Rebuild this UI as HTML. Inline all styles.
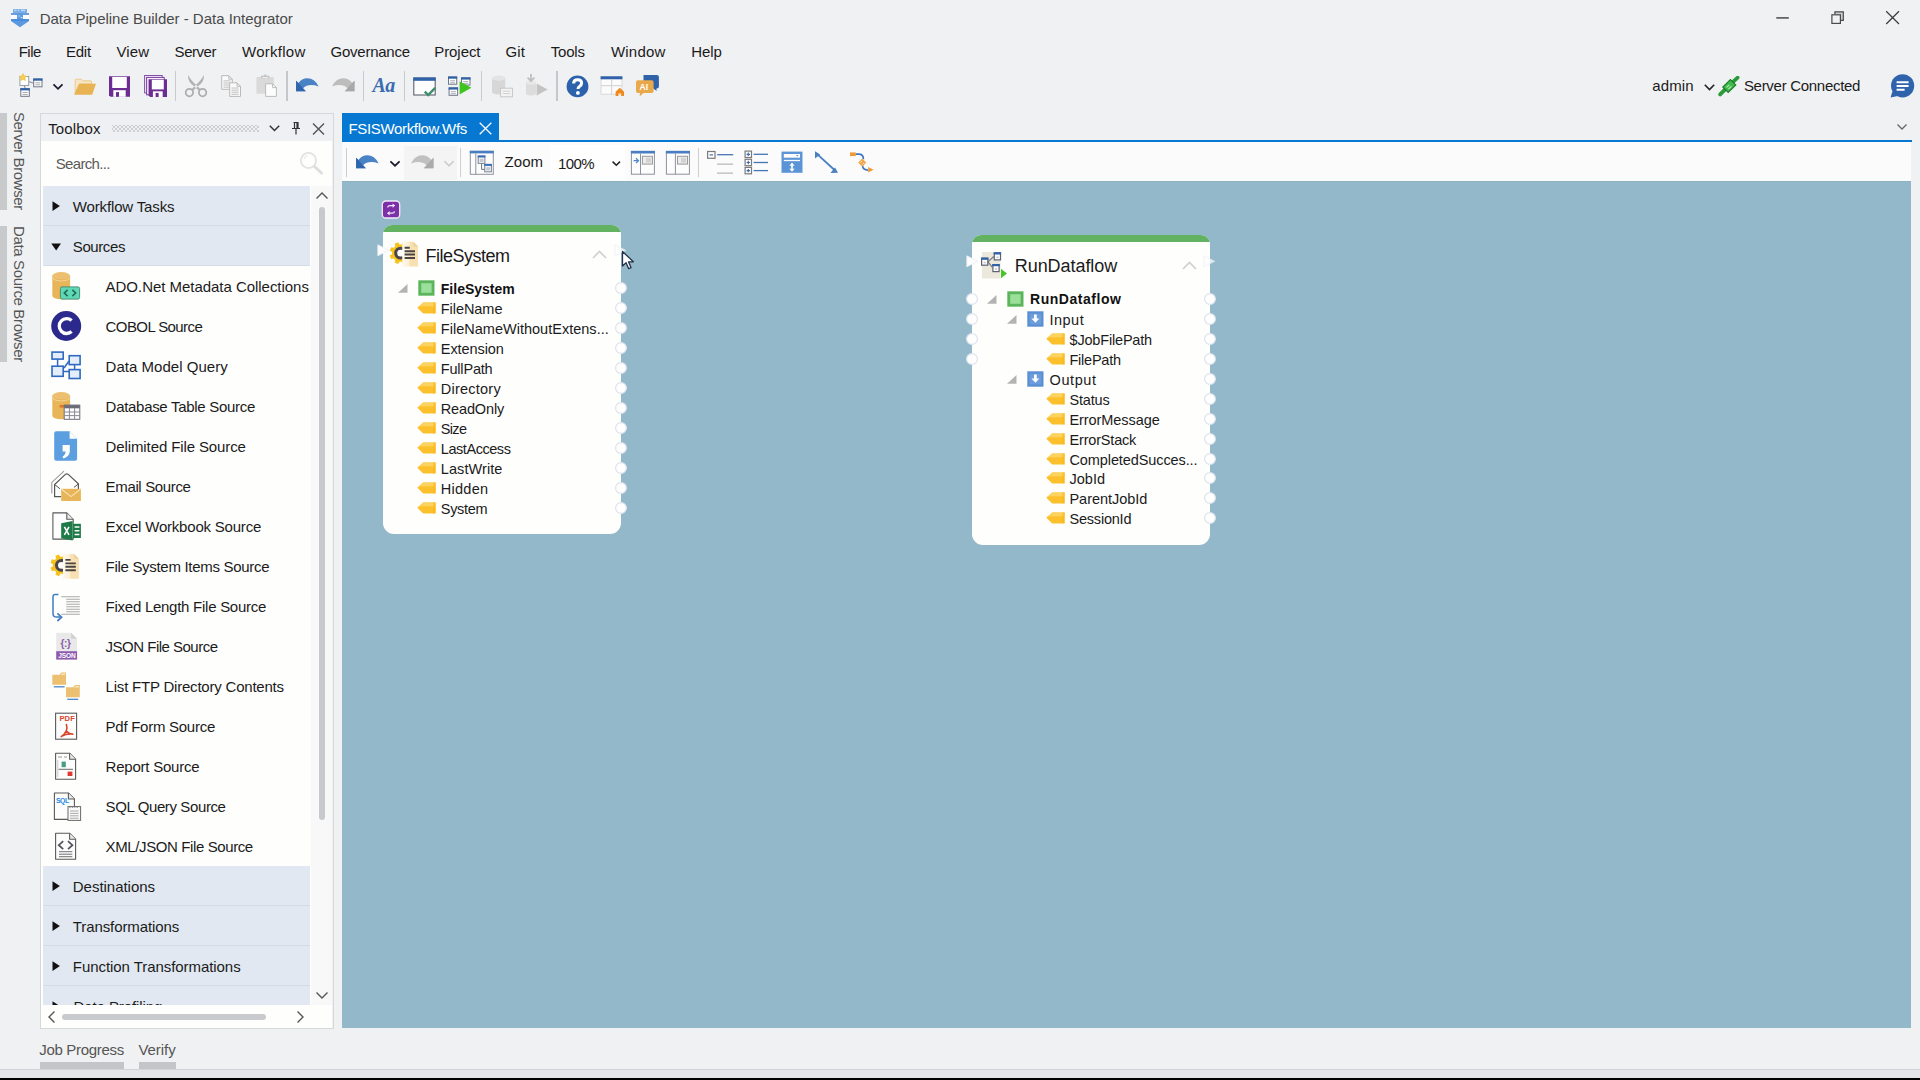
<!DOCTYPE html>
<html><head><meta charset="utf-8"><title>Data Pipeline Builder - Data Integrator</title>
<style>
html,body{margin:0;padding:0;}
body{width:1920px;height:1080px;overflow:hidden;position:relative;background:#f0f1f3;font-family:"Liberation Sans",sans-serif;color:#1b1b1b;}
.t{position:absolute;white-space:nowrap;line-height:1;}
.b{position:absolute;display:block;}
</style></head><body>
<span class="t" style="left:39.7px;top:11.1px;font-size:15px;letter-spacing:-0.011px;color:#4a4a4a;">Data Pipeline Builder - Data Integrator</span>
<svg class="b" style="left:1770px;top:5px;" width="140" height="26" viewBox="0 0 140 26"><path d="M6.3 12.9h12.5" stroke="#5c5c5c" stroke-width="1.7" fill="none"/><path d="M64.9 9.3V6.9h8.4v8.4h-2.6" stroke="#4a4a4a" stroke-width="1.2" fill="#cfcfcf"/><rect x="61.9" y="9.8" width="8.5" height="8.6" stroke="#4a4a4a" stroke-width="1.2" fill="#f0f1f3"/><path d="M116.2 6.2l12.8 12.8M129 6.2l-12.8 12.8" stroke="#3c3c3c" stroke-width="1.25" fill="none"/></svg>
<span class="t" style="left:18.7px;top:44.3px;font-size:15px;letter-spacing:-0.514px;color:#1b1b1b;">File</span>
<span class="t" style="left:65.9px;top:44.3px;font-size:15px;letter-spacing:-0.186px;color:#1b1b1b;">Edit</span>
<span class="t" style="left:116.6px;top:44.3px;font-size:15px;letter-spacing:0.041px;color:#1b1b1b;">View</span>
<span class="t" style="left:174.6px;top:44.3px;font-size:15px;letter-spacing:-0.465px;color:#1b1b1b;">Server</span>
<span class="t" style="left:242.0px;top:44.3px;font-size:15px;letter-spacing:0.262px;color:#1b1b1b;">Workflow</span>
<span class="t" style="left:330.6px;top:44.3px;font-size:15px;letter-spacing:-0.253px;color:#1b1b1b;">Governance</span>
<span class="t" style="left:434.2px;top:44.3px;font-size:15px;letter-spacing:-0.055px;color:#1b1b1b;">Project</span>
<span class="t" style="left:505.6px;top:44.3px;font-size:15px;letter-spacing:0.076px;color:#1b1b1b;">Git</span>
<span class="t" style="left:550.8px;top:44.3px;font-size:15px;letter-spacing:-0.203px;color:#1b1b1b;">Tools</span>
<span class="t" style="left:610.9px;top:44.3px;font-size:15px;letter-spacing:0.243px;color:#1b1b1b;">Window</span>
<span class="t" style="left:691.2px;top:44.3px;font-size:15px;letter-spacing:-0.086px;color:#1b1b1b;">Help</span>
<span class="t" style="left:1652.3px;top:77.8px;font-size:15px;letter-spacing:0.108px;color:#1b1b1b;">admin</span>
<svg class="b" style="left:1703px;top:83px;" width="13" height="9" viewBox="0 0 13 9"><path d="M1.8 1.8l4.7 4.7l4.7-4.7" stroke="#222" stroke-width="1.6" fill="none"/></svg>
<span class="t" style="left:1743.9px;top:77.7px;font-size:15px;letter-spacing:-0.289px;color:#1b1b1b;">Server Connected</span>
<svg class="b" style="left:1896px;top:123px;" width="12" height="8" viewBox="0 0 12 8"><path d="M1.5 1.5l4.5 4.5l4.5-4.5" stroke="#666" stroke-width="1.3" fill="none"/></svg>
<div class="b" style="left:0px;top:113px;width:7px;height:97px;background:#c8c9cb;"></div>
<div class="b" style="left:0px;top:226px;width:7px;height:136px;background:#c8c9cb;"></div>
<span class="t" style="left:19px;top:112.4px;font-size:15px;letter-spacing:-0.391px;color:#555;transform-origin:0 0;transform:rotate(90deg) translateY(-50%);line-height:1">Server Browser</span>
<span class="t" style="left:19px;top:226.3px;font-size:15px;letter-spacing:-0.351px;color:#555;transform-origin:0 0;transform:rotate(90deg) translateY(-50%);line-height:1">Data Source Browser</span>
<div class="b" style="left:40px;top:113px;width:294px;height:916px;background:#f0f1f3;border:1px solid #d5d7db;box-sizing:border-box"></div>
<div class="b" style="left:41px;top:114px;width:291px;height:27px;background:#eef0f3;"></div>
<div class="b" style="left:41px;top:141px;width:291px;height:887px;background:#fefefd;"></div>
<div class="b" style="left:311px;top:186px;width:21px;height:819px;background:#f8f8f8;"></div>
<span class="t" style="left:48.2px;top:121.3px;font-size:15px;letter-spacing:0.114px;color:#1b1b1b;">Toolbox</span>
<div class="b" style="left:112px;top:125px;width:147px;height:7px;background-image:radial-gradient(circle,#ccced4 0.75px,transparent 1.05px),radial-gradient(circle,#ccced4 0.75px,transparent 1.05px);background-size:4px 4px;background-position:0 0,2px 2px"></div>
<svg class="b" style="left:268px;top:124px;" width="13" height="9" viewBox="0 0 13 9"><path d="M1.8 1.8l4.7 4.7l4.7-4.7" stroke="#333" stroke-width="1.5" fill="none"/></svg>
<svg class="b" style="left:290px;top:121px;" width="12" height="14" viewBox="0 0 12 14"><path d="M3.5 1.5h5M4.5 1.5v6M8 1.5v6M7 1.5v6M2 7.5h8M6 7.5v6" stroke="#333" stroke-width="1.2" fill="none"/></svg>
<svg class="b" style="left:311px;top:122px;" width="15" height="14" viewBox="0 0 15 14"><path d="M2 1.5l11 11M13 1.5l-11 11" stroke="#505050" stroke-width="1.25" fill="none"/></svg>
<span class="t" style="left:55.8px;top:156.0px;font-size:15px;letter-spacing:-0.683px;color:#5a5a5a;">Search...</span>
<svg class="b" style="left:299px;top:151px;" width="26" height="24" viewBox="0 0 26 24"><circle cx="9.5" cy="9.5" r="7.6" stroke="#e2e2e2" stroke-width="1.8" fill="none"/><path d="M15.5 15.5l7 6.5" stroke="#dedede" stroke-width="3" stroke-linecap="round"/><path d="M5 8a5 5 0 0 1 3.5-3.5" stroke="#e6e6e6" stroke-width="1.2" fill="none"/></svg>
<div class="b" style="left:43px;top:186px;width:267px;height:39px;background:#e1e8f1;"></div>
<div class="b" style="left:43px;top:225px;width:267px;height:1px;background:#d5dce6;"></div>
<svg class="b" style="left:52px;top:201px;" width="9" height="11" viewBox="0 0 9 11"><path d="M0.5 0.2l7.4 4.9l-7.4 4.9z" fill="#111"/></svg>
<span class="t" style="left:72.8px;top:198.8px;font-size:15px;letter-spacing:-0.147px;color:#1b1b1b;">Workflow Tasks</span>
<div class="b" style="left:43px;top:226px;width:267px;height:39px;background:#e1e8f1;"></div>
<div class="b" style="left:43px;top:265px;width:267px;height:1px;background:#d5dce6;"></div>
<svg class="b" style="left:51px;top:242.5px;" width="11" height="8" viewBox="0 0 11 8"><path d="M0.3 0.5h9.7l-4.85 7z" fill="#111"/></svg>
<span class="t" style="left:72.8px;top:238.8px;font-size:15px;letter-spacing:-0.404px;color:#1b1b1b;">Sources</span>
<span class="t" style="left:105.6px;top:278.8px;font-size:15px;letter-spacing:-0.035px;color:#1b1b1b;">ADO.Net Metadata Collections</span>
<span class="t" style="left:105.6px;top:318.8px;font-size:15px;letter-spacing:-0.588px;color:#1b1b1b;">COBOL Source</span>
<span class="t" style="left:105.6px;top:358.8px;font-size:15px;letter-spacing:0.028px;color:#1b1b1b;">Data Model Query</span>
<span class="t" style="left:105.6px;top:398.8px;font-size:15px;letter-spacing:-0.299px;color:#1b1b1b;">Database Table Source</span>
<span class="t" style="left:105.6px;top:438.8px;font-size:15px;letter-spacing:-0.112px;color:#1b1b1b;">Delimited File Source</span>
<span class="t" style="left:105.6px;top:478.8px;font-size:15px;letter-spacing:-0.350px;color:#1b1b1b;">Email Source</span>
<span class="t" style="left:105.6px;top:518.8px;font-size:15px;letter-spacing:-0.205px;color:#1b1b1b;">Excel Workbook Source</span>
<span class="t" style="left:105.6px;top:558.8px;font-size:15px;letter-spacing:-0.304px;color:#1b1b1b;">File System Items Source</span>
<span class="t" style="left:105.6px;top:598.8px;font-size:15px;letter-spacing:-0.261px;color:#1b1b1b;">Fixed Length File Source</span>
<span class="t" style="left:105.6px;top:638.8px;font-size:15px;letter-spacing:-0.508px;color:#1b1b1b;">JSON File Source</span>
<span class="t" style="left:105.6px;top:678.8px;font-size:15px;letter-spacing:-0.210px;color:#1b1b1b;">List FTP Directory Contents</span>
<span class="t" style="left:105.6px;top:718.8px;font-size:15px;letter-spacing:-0.266px;color:#1b1b1b;">Pdf Form Source</span>
<span class="t" style="left:105.6px;top:758.8px;font-size:15px;letter-spacing:-0.226px;color:#1b1b1b;">Report Source</span>
<span class="t" style="left:105.6px;top:798.8px;font-size:15px;letter-spacing:-0.387px;color:#1b1b1b;">SQL Query Source</span>
<span class="t" style="left:105.6px;top:838.8px;font-size:15px;letter-spacing:-0.392px;color:#1b1b1b;">XML/JSON File Source</span>
<div class="b" style="left:43px;top:866px;width:267px;height:39px;background:#e1e8f1;"></div>
<div class="b" style="left:43px;top:905px;width:267px;height:1px;background:#d5dce6;"></div>
<svg class="b" style="left:52px;top:881px;" width="9" height="11" viewBox="0 0 9 11"><path d="M0.5 0.2l7.4 4.9l-7.4 4.9z" fill="#111"/></svg>
<span class="t" style="left:72.8px;top:878.8px;font-size:15px;letter-spacing:-0.029px;color:#1b1b1b;">Destinations</span>
<div class="b" style="left:43px;top:906px;width:267px;height:39px;background:#e1e8f1;"></div>
<div class="b" style="left:43px;top:945px;width:267px;height:1px;background:#d5dce6;"></div>
<svg class="b" style="left:52px;top:921px;" width="9" height="11" viewBox="0 0 9 11"><path d="M0.5 0.2l7.4 4.9l-7.4 4.9z" fill="#111"/></svg>
<span class="t" style="left:72.8px;top:918.8px;font-size:15px;letter-spacing:-0.095px;color:#1b1b1b;">Transformations</span>
<div class="b" style="left:43px;top:946px;width:267px;height:39px;background:#e1e8f1;"></div>
<div class="b" style="left:43px;top:985px;width:267px;height:1px;background:#d5dce6;"></div>
<svg class="b" style="left:52px;top:961px;" width="9" height="11" viewBox="0 0 9 11"><path d="M0.5 0.2l7.4 4.9l-7.4 4.9z" fill="#111"/></svg>
<span class="t" style="left:72.8px;top:958.8px;font-size:15px;letter-spacing:-0.061px;color:#1b1b1b;">Function Transformations</span>
<div class="b" style="left:43px;top:986px;width:267px;height:19px;overflow:hidden;background:#e1e8f1">
<svg class="b" style="left:9px;top:15px" width="9" height="11"><path d="M0.5 0.2l7.4 4.9l-7.4 4.9z" fill="#111"/></svg>
<span class="t" style="left:30.6px;top:12.8px;font-size:15px;letter-spacing:-0.1px">Data Profiling</span></div>
<svg class="b" style="left:315px;top:191px;" width="14" height="9" viewBox="0 0 14 9"><path d="M1.5 7.5l5.5-5.5l5.5 5.5" stroke="#555" stroke-width="1.4" fill="none"/></svg>
<div class="b" style="left:319.3px;top:207px;width:5.4px;height:613px;background:#c8c9cc;border-radius:3px"></div>
<svg class="b" style="left:315px;top:991px;" width="14" height="9" viewBox="0 0 14 9"><path d="M1.5 1.5l5.5 5.5l5.5-5.5" stroke="#555" stroke-width="1.4" fill="none"/></svg>
<svg class="b" style="left:47px;top:1010px;" width="9" height="14" viewBox="0 0 9 14"><path d="M7.5 1.5l-5.5 5.5l5.5 5.5" stroke="#555" stroke-width="1.4" fill="none"/></svg>
<svg class="b" style="left:296px;top:1010px;" width="9" height="14" viewBox="0 0 9 14"><path d="M1.5 1.5l5.5 5.5l-5.5 5.5" stroke="#555" stroke-width="1.4" fill="none"/></svg>
<div class="b" style="left:62px;top:1014px;width:204px;height:6px;background:#c9cacd;border-radius:3px"></div>
<span class="t" style="left:39.2px;top:1042.1px;font-size:15px;letter-spacing:-0.299px;color:#555;">Job Progress</span>
<span class="t" style="left:138.4px;top:1042.1px;font-size:15px;letter-spacing:-0.053px;color:#555;">Verify</span>
<div class="b" style="left:40px;top:1062px;width:84px;height:7px;background:#c4c5c9;"></div>
<div class="b" style="left:139px;top:1062px;width:37px;height:7px;background:#c4c5c9;"></div>
<div class="b" style="left:0px;top:1069px;width:1920px;height:1px;background:#d2d3d6;"></div>
<div class="b" style="left:0px;top:1070px;width:1920px;height:8px;background:#e4e5e8;"></div>
<div class="b" style="left:0px;top:1078px;width:1920px;height:2px;background:#000;"></div>
<div class="b" style="left:342px;top:113px;width:157px;height:28px;background:#0678d2;"></div>
<div class="b" style="left:342px;top:140px;width:1570px;height:2px;background:#0678d2;"></div>
<span class="t" style="left:348.5px;top:121.3px;font-size:15px;letter-spacing:-0.344px;color:#fff;">FSISWorkflow.Wfs</span>
<svg class="b" style="left:478px;top:121px;" width="15" height="15" viewBox="0 0 15 15"><path d="M1.7 1.7l11.6 11.6M13.3 1.7l-11.6 11.6" stroke="#fff" stroke-width="1.3" fill="none"/></svg>
<div class="b" style="left:342px;top:181px;width:1569px;height:847px;background:#93b8c9;"></div>
<div class="b" style="left:342px;top:181px;width:1569px;height:1px;background:#8eb0c1;"></div>
<div class="b" style="left:383px;top:224.5px;width:238px;height:309.5px;background:#fefefd;border-radius:9px 9px 11px 11px;overflow:hidden"><div style="height:7px;background:#62b262"></div></div>
<span class="t" style="left:425.6px;top:246.9px;font-size:18px;letter-spacing:-0.507px;color:#1b1b1b;">FileSystem</span>
<svg class="b" style="left:377px;top:244px;" width="13" height="13" viewBox="0 0 13 13"><path d="M0.8 0.8L11.8 6.3L0.8 11.8z" fill="#fdfdfd" stroke="#e9eef6" stroke-width="0.8" opacity="1"/></svg>
<svg class="b" style="left:614.2px;top:244.2px;" width="13" height="13" viewBox="0 0 13 13"><path d="M0.8 0.8L11.8 6.3L0.8 11.8z" fill="#fdfdfd" stroke="#e9eef6" stroke-width="0.8" opacity="0.8"/></svg>
<svg class="b" style="left:592px;top:250px;" width="15" height="9" viewBox="0 0 15 9"><path d="M1 8l6.5-6.5L14 8" stroke="#d0d0d0" stroke-width="1.7" fill="none"/></svg>
<svg class="b" style="left:397.7px;top:284.3px;" width="10" height="9" viewBox="0 0 10 9"><path d="M9.5 0v8.7H0z" fill="#b3b3b3"/></svg>
<svg class="b" style="left:418px;top:280px;" width="17" height="16" viewBox="0 0 17 16"><rect x="0.3" y="0.3" width="16.2" height="15.4" fill="#5cb55c"/><rect x="3.2" y="3.2" width="10.4" height="9.6" fill="#9adf9a"/></svg>
<span class="t" style="left:440.8px;top:281.5px;font-size:14px;letter-spacing:0.004px;color:#111;font-weight:bold;">FileSystem</span>
<svg class="b" style="left:417.2px;top:302.2px;" width="19" height="12" viewBox="0 0 19 12"><path d="M0.3 5.8L6.2 0.4H18.6V11.4H6.2z" fill="#fcc02c"/><path d="M0.3 5.8L6.2 0.4H18.6V4.2H3.5z" fill="#fdd35f"/><path d="M16.2 0.4h2.4v11h-2.4z" fill="#f9b514" opacity=".55"/></svg>
<span class="t" style="left:440.8px;top:302.1px;font-size:14.5px;letter-spacing:-0.057px;color:#1b1b1b;">FileName</span>
<svg class="b" style="left:417.2px;top:322.2px;" width="19" height="12" viewBox="0 0 19 12"><path d="M0.3 5.8L6.2 0.4H18.6V11.4H6.2z" fill="#fcc02c"/><path d="M0.3 5.8L6.2 0.4H18.6V4.2H3.5z" fill="#fdd35f"/><path d="M16.2 0.4h2.4v11h-2.4z" fill="#f9b514" opacity=".55"/></svg>
<span class="t" style="left:440.8px;top:322.1px;font-size:14.5px;letter-spacing:0.015px;color:#1b1b1b;">FileNameWithoutExtens...</span>
<svg class="b" style="left:417.2px;top:342.2px;" width="19" height="12" viewBox="0 0 19 12"><path d="M0.3 5.8L6.2 0.4H18.6V11.4H6.2z" fill="#fcc02c"/><path d="M0.3 5.8L6.2 0.4H18.6V4.2H3.5z" fill="#fdd35f"/><path d="M16.2 0.4h2.4v11h-2.4z" fill="#f9b514" opacity=".55"/></svg>
<span class="t" style="left:440.8px;top:342.1px;font-size:14.5px;letter-spacing:-0.078px;color:#1b1b1b;">Extension</span>
<svg class="b" style="left:417.2px;top:362.2px;" width="19" height="12" viewBox="0 0 19 12"><path d="M0.3 5.8L6.2 0.4H18.6V11.4H6.2z" fill="#fcc02c"/><path d="M0.3 5.8L6.2 0.4H18.6V4.2H3.5z" fill="#fdd35f"/><path d="M16.2 0.4h2.4v11h-2.4z" fill="#f9b514" opacity=".55"/></svg>
<span class="t" style="left:440.8px;top:362.1px;font-size:14.5px;letter-spacing:-0.189px;color:#1b1b1b;">FullPath</span>
<svg class="b" style="left:417.2px;top:382.2px;" width="19" height="12" viewBox="0 0 19 12"><path d="M0.3 5.8L6.2 0.4H18.6V11.4H6.2z" fill="#fcc02c"/><path d="M0.3 5.8L6.2 0.4H18.6V4.2H3.5z" fill="#fdd35f"/><path d="M16.2 0.4h2.4v11h-2.4z" fill="#f9b514" opacity=".55"/></svg>
<span class="t" style="left:440.8px;top:382.1px;font-size:14.5px;letter-spacing:0.230px;color:#1b1b1b;">Directory</span>
<svg class="b" style="left:417.2px;top:402.2px;" width="19" height="12" viewBox="0 0 19 12"><path d="M0.3 5.8L6.2 0.4H18.6V11.4H6.2z" fill="#fcc02c"/><path d="M0.3 5.8L6.2 0.4H18.6V4.2H3.5z" fill="#fdd35f"/><path d="M16.2 0.4h2.4v11h-2.4z" fill="#f9b514" opacity=".55"/></svg>
<span class="t" style="left:440.8px;top:402.1px;font-size:14.5px;letter-spacing:-0.149px;color:#1b1b1b;">ReadOnly</span>
<svg class="b" style="left:417.2px;top:422.2px;" width="19" height="12" viewBox="0 0 19 12"><path d="M0.3 5.8L6.2 0.4H18.6V11.4H6.2z" fill="#fcc02c"/><path d="M0.3 5.8L6.2 0.4H18.6V4.2H3.5z" fill="#fdd35f"/><path d="M16.2 0.4h2.4v11h-2.4z" fill="#f9b514" opacity=".55"/></svg>
<span class="t" style="left:440.8px;top:422.1px;font-size:14.5px;letter-spacing:-0.682px;color:#1b1b1b;">Size</span>
<svg class="b" style="left:417.2px;top:442.2px;" width="19" height="12" viewBox="0 0 19 12"><path d="M0.3 5.8L6.2 0.4H18.6V11.4H6.2z" fill="#fcc02c"/><path d="M0.3 5.8L6.2 0.4H18.6V4.2H3.5z" fill="#fdd35f"/><path d="M16.2 0.4h2.4v11h-2.4z" fill="#f9b514" opacity=".55"/></svg>
<span class="t" style="left:440.8px;top:442.1px;font-size:14.5px;letter-spacing:-0.447px;color:#1b1b1b;">LastAccess</span>
<svg class="b" style="left:417.2px;top:462.2px;" width="19" height="12" viewBox="0 0 19 12"><path d="M0.3 5.8L6.2 0.4H18.6V11.4H6.2z" fill="#fcc02c"/><path d="M0.3 5.8L6.2 0.4H18.6V4.2H3.5z" fill="#fdd35f"/><path d="M16.2 0.4h2.4v11h-2.4z" fill="#f9b514" opacity=".55"/></svg>
<span class="t" style="left:440.8px;top:462.1px;font-size:14.5px;letter-spacing:0.078px;color:#1b1b1b;">LastWrite</span>
<svg class="b" style="left:417.2px;top:482.2px;" width="19" height="12" viewBox="0 0 19 12"><path d="M0.3 5.8L6.2 0.4H18.6V11.4H6.2z" fill="#fcc02c"/><path d="M0.3 5.8L6.2 0.4H18.6V4.2H3.5z" fill="#fdd35f"/><path d="M16.2 0.4h2.4v11h-2.4z" fill="#f9b514" opacity=".55"/></svg>
<span class="t" style="left:440.8px;top:482.1px;font-size:14.5px;letter-spacing:0.273px;color:#1b1b1b;">Hidden</span>
<svg class="b" style="left:417.2px;top:502.2px;" width="19" height="12" viewBox="0 0 19 12"><path d="M0.3 5.8L6.2 0.4H18.6V11.4H6.2z" fill="#fcc02c"/><path d="M0.3 5.8L6.2 0.4H18.6V4.2H3.5z" fill="#fdd35f"/><path d="M16.2 0.4h2.4v11h-2.4z" fill="#f9b514" opacity=".55"/></svg>
<span class="t" style="left:440.8px;top:502.1px;font-size:14.5px;letter-spacing:-0.328px;color:#1b1b1b;">System</span>
<svg class="b" style="left:613.9px;top:281px;" width="14" height="14" viewBox="0 0 14 14"><circle cx="7" cy="7" r="5.4" fill="#fefefe" stroke="#dde3ec" stroke-width="1.2"/></svg>
<svg class="b" style="left:613.9px;top:301px;" width="14" height="14" viewBox="0 0 14 14"><circle cx="7" cy="7" r="5.4" fill="#fefefe" stroke="#dde3ec" stroke-width="1.2"/></svg>
<svg class="b" style="left:613.9px;top:321px;" width="14" height="14" viewBox="0 0 14 14"><circle cx="7" cy="7" r="5.4" fill="#fefefe" stroke="#dde3ec" stroke-width="1.2"/></svg>
<svg class="b" style="left:613.9px;top:341px;" width="14" height="14" viewBox="0 0 14 14"><circle cx="7" cy="7" r="5.4" fill="#fefefe" stroke="#dde3ec" stroke-width="1.2"/></svg>
<svg class="b" style="left:613.9px;top:361px;" width="14" height="14" viewBox="0 0 14 14"><circle cx="7" cy="7" r="5.4" fill="#fefefe" stroke="#dde3ec" stroke-width="1.2"/></svg>
<svg class="b" style="left:613.9px;top:381px;" width="14" height="14" viewBox="0 0 14 14"><circle cx="7" cy="7" r="5.4" fill="#fefefe" stroke="#dde3ec" stroke-width="1.2"/></svg>
<svg class="b" style="left:613.9px;top:401px;" width="14" height="14" viewBox="0 0 14 14"><circle cx="7" cy="7" r="5.4" fill="#fefefe" stroke="#dde3ec" stroke-width="1.2"/></svg>
<svg class="b" style="left:613.9px;top:421px;" width="14" height="14" viewBox="0 0 14 14"><circle cx="7" cy="7" r="5.4" fill="#fefefe" stroke="#dde3ec" stroke-width="1.2"/></svg>
<svg class="b" style="left:613.9px;top:441px;" width="14" height="14" viewBox="0 0 14 14"><circle cx="7" cy="7" r="5.4" fill="#fefefe" stroke="#dde3ec" stroke-width="1.2"/></svg>
<svg class="b" style="left:613.9px;top:461px;" width="14" height="14" viewBox="0 0 14 14"><circle cx="7" cy="7" r="5.4" fill="#fefefe" stroke="#dde3ec" stroke-width="1.2"/></svg>
<svg class="b" style="left:613.9px;top:481px;" width="14" height="14" viewBox="0 0 14 14"><circle cx="7" cy="7" r="5.4" fill="#fefefe" stroke="#dde3ec" stroke-width="1.2"/></svg>
<svg class="b" style="left:613.9px;top:501px;" width="14" height="14" viewBox="0 0 14 14"><circle cx="7" cy="7" r="5.4" fill="#fefefe" stroke="#dde3ec" stroke-width="1.2"/></svg>
<div class="b" style="left:972px;top:235px;width:238px;height:309.5px;background:#fefefd;border-radius:9px 9px 11px 11px;overflow:hidden"><div style="height:7px;background:#62b262"></div></div>
<span class="t" style="left:1014.8px;top:257.4px;font-size:18px;letter-spacing:-0.065px;color:#1b1b1b;">RunDataflow</span>
<svg class="b" style="left:966px;top:254.5px;" width="13" height="13" viewBox="0 0 13 13"><path d="M0.8 0.8L11.8 6.3L0.8 11.8z" fill="#fdfdfd" stroke="#e9eef6" stroke-width="0.8" opacity="1"/></svg>
<svg class="b" style="left:1203px;top:254.5px;" width="13" height="13" viewBox="0 0 13 13"><path d="M0.8 0.8L11.8 6.3L0.8 11.8z" fill="#fdfdfd" stroke="#e9eef6" stroke-width="0.8" opacity="0.75"/></svg>
<svg class="b" style="left:1181.5px;top:261px;" width="15" height="9" viewBox="0 0 15 9"><path d="M1 8l6.5-6.5L14 8" stroke="#d0d0d0" stroke-width="1.7" fill="none"/></svg>
<svg class="b" style="left:987px;top:294.7px;" width="10" height="9" viewBox="0 0 10 9"><path d="M9.5 0v8.7H0z" fill="#b3b3b3"/></svg>
<svg class="b" style="left:1007.2px;top:290.8px;" width="17" height="16" viewBox="0 0 17 16"><rect x="0.3" y="0.3" width="16.2" height="15.4" fill="#5cb55c"/><rect x="3.2" y="3.2" width="10.4" height="9.6" fill="#9adf9a"/></svg>
<span class="t" style="left:1030.1px;top:292.4px;font-size:14px;letter-spacing:0.521px;color:#111;font-weight:bold;">RunDataflow</span>
<svg class="b" style="left:1007px;top:314.7px;" width="10" height="9" viewBox="0 0 10 9"><path d="M9.5 0v8.7H0z" fill="#b3b3b3"/></svg>
<svg class="b" style="left:1027.3px;top:310.7px;" width="17" height="16" viewBox="0 0 17 16"><rect x="0.3" y="0.3" width="16.2" height="15.4" fill="#5a8fd3"/><rect x="2.6" y="2.6" width="11.6" height="10.8" fill="#6c9cdc"/><path d="M7 3.6h2.8v3.8h2.6l-4 4.4l-4-4.4H7z" fill="#fdfdfd"/></svg>
<span class="t" style="left:1049.5px;top:312.7px;font-size:14.5px;letter-spacing:0.485px;color:#1b1b1b;">Input</span>
<svg class="b" style="left:1046.3px;top:333.09999999999997px;" width="19" height="12" viewBox="0 0 19 12"><path d="M0.3 5.8L6.2 0.4H18.6V11.4H6.2z" fill="#fcc02c"/><path d="M0.3 5.8L6.2 0.4H18.6V4.2H3.5z" fill="#fdd35f"/><path d="M16.2 0.4h2.4v11h-2.4z" fill="#f9b514" opacity=".55"/></svg>
<span class="t" style="left:1069.5px;top:332.7px;font-size:14.5px;letter-spacing:-0.179px;color:#1b1b1b;">$JobFilePath</span>
<svg class="b" style="left:1046.3px;top:353.09999999999997px;" width="19" height="12" viewBox="0 0 19 12"><path d="M0.3 5.8L6.2 0.4H18.6V11.4H6.2z" fill="#fcc02c"/><path d="M0.3 5.8L6.2 0.4H18.6V4.2H3.5z" fill="#fdd35f"/><path d="M16.2 0.4h2.4v11h-2.4z" fill="#f9b514" opacity=".55"/></svg>
<span class="t" style="left:1069.5px;top:352.7px;font-size:14.5px;letter-spacing:-0.239px;color:#1b1b1b;">FilePath</span>
<svg class="b" style="left:1007px;top:374.7px;" width="10" height="9" viewBox="0 0 10 9"><path d="M9.5 0v8.7H0z" fill="#b3b3b3"/></svg>
<svg class="b" style="left:1027.3px;top:370.7px;" width="17" height="16" viewBox="0 0 17 16"><rect x="0.3" y="0.3" width="16.2" height="15.4" fill="#5a8fd3"/><rect x="2.6" y="2.6" width="11.6" height="10.8" fill="#6c9cdc"/><path d="M7 3.6h2.8v3.8h2.6l-4 4.4l-4-4.4H7z" fill="#fdfdfd"/></svg>
<span class="t" style="left:1049.5px;top:372.7px;font-size:14.5px;letter-spacing:0.607px;color:#1b1b1b;">Output</span>
<svg class="b" style="left:1046.3px;top:393.09999999999997px;" width="19" height="12" viewBox="0 0 19 12"><path d="M0.3 5.8L6.2 0.4H18.6V11.4H6.2z" fill="#fcc02c"/><path d="M0.3 5.8L6.2 0.4H18.6V4.2H3.5z" fill="#fdd35f"/><path d="M16.2 0.4h2.4v11h-2.4z" fill="#f9b514" opacity=".55"/></svg>
<span class="t" style="left:1069.5px;top:392.7px;font-size:14.5px;letter-spacing:-0.189px;color:#1b1b1b;">Status</span>
<svg class="b" style="left:1046.3px;top:413.09999999999997px;" width="19" height="12" viewBox="0 0 19 12"><path d="M0.3 5.8L6.2 0.4H18.6V11.4H6.2z" fill="#fcc02c"/><path d="M0.3 5.8L6.2 0.4H18.6V4.2H3.5z" fill="#fdd35f"/><path d="M16.2 0.4h2.4v11h-2.4z" fill="#f9b514" opacity=".55"/></svg>
<span class="t" style="left:1069.5px;top:412.7px;font-size:14.5px;letter-spacing:-0.073px;color:#1b1b1b;">ErrorMessage</span>
<svg class="b" style="left:1046.3px;top:433.09999999999997px;" width="19" height="12" viewBox="0 0 19 12"><path d="M0.3 5.8L6.2 0.4H18.6V11.4H6.2z" fill="#fcc02c"/><path d="M0.3 5.8L6.2 0.4H18.6V4.2H3.5z" fill="#fdd35f"/><path d="M16.2 0.4h2.4v11h-2.4z" fill="#f9b514" opacity=".55"/></svg>
<span class="t" style="left:1069.5px;top:432.7px;font-size:14.5px;letter-spacing:-0.181px;color:#1b1b1b;">ErrorStack</span>
<svg class="b" style="left:1046.3px;top:453.09999999999997px;" width="19" height="12" viewBox="0 0 19 12"><path d="M0.3 5.8L6.2 0.4H18.6V11.4H6.2z" fill="#fcc02c"/><path d="M0.3 5.8L6.2 0.4H18.6V4.2H3.5z" fill="#fdd35f"/><path d="M16.2 0.4h2.4v11h-2.4z" fill="#f9b514" opacity=".55"/></svg>
<span class="t" style="left:1069.5px;top:452.7px;font-size:14.5px;letter-spacing:-0.099px;color:#1b1b1b;">CompletedSucces...</span>
<svg class="b" style="left:1046.3px;top:472.29999999999995px;" width="19" height="12" viewBox="0 0 19 12"><path d="M0.3 5.8L6.2 0.4H18.6V11.4H6.2z" fill="#fcc02c"/><path d="M0.3 5.8L6.2 0.4H18.6V4.2H3.5z" fill="#fdd35f"/><path d="M16.2 0.4h2.4v11h-2.4z" fill="#f9b514" opacity=".55"/></svg>
<span class="t" style="left:1069.5px;top:471.9px;font-size:14.5px;letter-spacing:0.001px;color:#1b1b1b;">JobId</span>
<svg class="b" style="left:1046.3px;top:492.29999999999995px;" width="19" height="12" viewBox="0 0 19 12"><path d="M0.3 5.8L6.2 0.4H18.6V11.4H6.2z" fill="#fcc02c"/><path d="M0.3 5.8L6.2 0.4H18.6V4.2H3.5z" fill="#fdd35f"/><path d="M16.2 0.4h2.4v11h-2.4z" fill="#f9b514" opacity=".55"/></svg>
<span class="t" style="left:1069.5px;top:491.9px;font-size:14.5px;letter-spacing:-0.047px;color:#1b1b1b;">ParentJobId</span>
<svg class="b" style="left:1046.3px;top:512.3000000000001px;" width="19" height="12" viewBox="0 0 19 12"><path d="M0.3 5.8L6.2 0.4H18.6V11.4H6.2z" fill="#fcc02c"/><path d="M0.3 5.8L6.2 0.4H18.6V4.2H3.5z" fill="#fdd35f"/><path d="M16.2 0.4h2.4v11h-2.4z" fill="#f9b514" opacity=".55"/></svg>
<span class="t" style="left:1069.5px;top:511.9px;font-size:14.5px;letter-spacing:-0.211px;color:#1b1b1b;">SessionId</span>
<svg class="b" style="left:1202.9px;top:291.5px;" width="14" height="14" viewBox="0 0 14 14"><circle cx="7" cy="7" r="5.4" fill="#fefefe" stroke="#dde3ec" stroke-width="1.2"/></svg>
<svg class="b" style="left:1202.9px;top:311.5px;" width="14" height="14" viewBox="0 0 14 14"><circle cx="7" cy="7" r="5.4" fill="#fefefe" stroke="#dde3ec" stroke-width="1.2"/></svg>
<svg class="b" style="left:1202.9px;top:331.5px;" width="14" height="14" viewBox="0 0 14 14"><circle cx="7" cy="7" r="5.4" fill="#fefefe" stroke="#dde3ec" stroke-width="1.2"/></svg>
<svg class="b" style="left:1202.9px;top:351.5px;" width="14" height="14" viewBox="0 0 14 14"><circle cx="7" cy="7" r="5.4" fill="#fefefe" stroke="#dde3ec" stroke-width="1.2"/></svg>
<svg class="b" style="left:1202.9px;top:371.5px;" width="14" height="14" viewBox="0 0 14 14"><circle cx="7" cy="7" r="5.4" fill="#fefefe" stroke="#dde3ec" stroke-width="1.2"/></svg>
<svg class="b" style="left:1202.9px;top:391.5px;" width="14" height="14" viewBox="0 0 14 14"><circle cx="7" cy="7" r="5.4" fill="#fefefe" stroke="#dde3ec" stroke-width="1.2"/></svg>
<svg class="b" style="left:1202.9px;top:411.5px;" width="14" height="14" viewBox="0 0 14 14"><circle cx="7" cy="7" r="5.4" fill="#fefefe" stroke="#dde3ec" stroke-width="1.2"/></svg>
<svg class="b" style="left:1202.9px;top:431.5px;" width="14" height="14" viewBox="0 0 14 14"><circle cx="7" cy="7" r="5.4" fill="#fefefe" stroke="#dde3ec" stroke-width="1.2"/></svg>
<svg class="b" style="left:1202.9px;top:451.5px;" width="14" height="14" viewBox="0 0 14 14"><circle cx="7" cy="7" r="5.4" fill="#fefefe" stroke="#dde3ec" stroke-width="1.2"/></svg>
<svg class="b" style="left:1202.9px;top:471.0px;" width="14" height="14" viewBox="0 0 14 14"><circle cx="7" cy="7" r="5.4" fill="#fefefe" stroke="#dde3ec" stroke-width="1.2"/></svg>
<svg class="b" style="left:1202.9px;top:491.0px;" width="14" height="14" viewBox="0 0 14 14"><circle cx="7" cy="7" r="5.4" fill="#fefefe" stroke="#dde3ec" stroke-width="1.2"/></svg>
<svg class="b" style="left:1202.9px;top:511.0px;" width="14" height="14" viewBox="0 0 14 14"><circle cx="7" cy="7" r="5.4" fill="#fefefe" stroke="#dde3ec" stroke-width="1.2"/></svg>
<svg class="b" style="left:965.3px;top:291.5px;" width="14" height="14" viewBox="0 0 14 14"><circle cx="7" cy="7" r="5.4" fill="#fefefe" stroke="#dde3ec" stroke-width="1.2"/></svg>
<svg class="b" style="left:965.3px;top:311.5px;" width="14" height="14" viewBox="0 0 14 14"><circle cx="7" cy="7" r="5.4" fill="#fefefe" stroke="#dde3ec" stroke-width="1.2"/></svg>
<svg class="b" style="left:965.3px;top:331.5px;" width="14" height="14" viewBox="0 0 14 14"><circle cx="7" cy="7" r="5.4" fill="#fefefe" stroke="#dde3ec" stroke-width="1.2"/></svg>
<svg class="b" style="left:965.3px;top:351.5px;" width="14" height="14" viewBox="0 0 14 14"><circle cx="7" cy="7" r="5.4" fill="#fefefe" stroke="#dde3ec" stroke-width="1.2"/></svg>
<svg class="b" style="left:381px;top:200px;" width="20" height="19" viewBox="0 0 20 19"><rect x="1.3" y="1" width="17.4" height="17" rx="3.6" fill="#7c30a8" stroke="#f3eaf8" stroke-width="1.3"/><path d="M6.6 7.4q.4-1.8 2.6-1.8h3.4M13.6 11.4q-.4 1.8-2.6 1.8H7.6" stroke="#f4e6fa" stroke-width="1.3" fill="none"/><path d="M11.6 3.4l2.6 2.2l-2.6 2.2zM8.6 11l-2.6 2.2l2.6 2.2z" fill="#f4e6fa"/></svg>
<svg class="b" style="left:620.6px;top:250.2px;" width="15" height="21" viewBox="0 0 15 21"><path d="M1.5 1.5v14.5l3.6-3.3l2.6 6l2.4-1l-2.6-5.9h4.9z" fill="#fff" stroke="#26324a" stroke-width="1.3" stroke-linejoin="round"/></svg>
<svg class="b" style="left:389px;top:241px;" width="30" height="27" viewBox="0 0 30 27"><defs><linearGradient id="pg389" x1="0" x2="1" y1="0" y2="0"><stop offset="0" stop-color="#fefaf0"/><stop offset=".45" stop-color="#fcefd2"/><stop offset=".5" stop-color="#f8e0b2"/><stop offset="1" stop-color="#f8e0b2"/></linearGradient><clipPath id="gc389"><rect x="0" y="0" width="13.2" height="27"/></clipPath></defs><path d="M12.8 0.8H24.4L29.1 5.5V25.5H12.8z" fill="url(#pg389)"/><path d="M24.4 0.8V5.5H29.1z" fill="#ecd19c"/><g clip-path="url(#gc389)"><path d="M20.14 13.15L22.52 14.57L21.07 18.07L18.38 17.39L16.89 18.88L17.57 21.57L14.07 23.02L12.65 20.64L10.55 20.64L9.13 23.02L5.63 21.57L6.31 18.88L4.82 17.39L2.13 18.07L0.68 14.57L3.06 13.15L3.06 11.05L0.68 9.63L2.13 6.13L4.82 6.81L6.31 5.32L5.63 2.63L9.13 1.18L10.55 3.56L12.65 3.56L14.07 1.18L17.57 2.63L16.89 5.32L18.38 6.81L21.07 6.13L22.52 9.63L20.14 11.05z" fill="#f6c31c"/><circle cx="11.6" cy="12.1" r="4.9" fill="#fdfcf8" stroke="#4a4650" stroke-width="3"/></g><path d="M12.8 8.7h1.6v6.8h-1.6z" fill="#fdfcf8"/><path d="M15.6 6.7h5.2M15.6 10.2h10.4M15.6 13.5h10.4M15.6 17h10.4" stroke="#4a4542" stroke-width="1.9"/></svg>
<svg class="b" style="left:980px;top:251px;" width="29" height="29" viewBox="0 0 29 29"><rect x="2" y="1" width="18.5" height="26.5" fill="#ece8dc"/><path d="M8 10.8L13.8 5.4M8 10.8L12.4 16.4" stroke="#7a7f8a" stroke-width="1.3"/><rect x="14.299999999999999" y="1.9" width="6.2" height="6.999999999999999" fill="#fdfdfd" stroke="#5c6272" stroke-width="1.2"/><rect x="13.7" y="1.3" width="7.4" height="2.2" fill="#2f62a8"/><rect x="16.3" y="5.5" width="2.2" height="1.6" fill="#c8c8c8"/><rect x="1.6" y="7.199999999999999" width="6.2" height="6.999999999999999" fill="#fdfdfd" stroke="#5c6272" stroke-width="1.2"/><rect x="1" y="6.6" width="7.4" height="2.2" fill="#2f62a8"/><rect x="3.6" y="10.8" width="2.2" height="1.6" fill="#c8c8c8"/><rect x="12.9" y="13.6" width="6.2" height="6.999999999999999" fill="#fdfdfd" stroke="#5c6272" stroke-width="1.2"/><rect x="12.3" y="13" width="7.4" height="2.2" fill="#2f62a8"/><rect x="14.9" y="17.2" width="2.2" height="1.6" fill="#c8c8c8"/><path d="M21 17.8v9.4l6-4.7z" fill="#4cc32c"/></svg>
<svg class="b" style="left:10px;top:8px;" width="20" height="20" viewBox="0 0 20 20"><path d="M3 1h14v4.3H3z" fill="#7eb0e8"/><path d="M4.5 2.2h2M8 2.2h1.2M11 2.2h4" stroke="#d9e9fa" stroke-width="1"/><path d="M1 5.3h18v6H1z" fill="#fafcff"/><path d="M1 5.3h18v1.4H1z" fill="#2e74d2"/><path d="M7 5.3h6v6H7z" fill="#5b9be3"/><path d="M8.5 8h1.2M10.8 9.6h1.6" stroke="#e6f0fc" stroke-width="1"/><path d="M1 11.3h18v1.6L10 19.3L1 12.9z" fill="#5b98e0"/><path d="M1 11.3h18v1.3H1z" fill="#3d80d8"/></svg>
<div class="b" style="left:175px;top:71px;width:1.2px;height:30px;background:#c9cacd;"></div>
<div class="b" style="left:363px;top:71px;width:1.2px;height:30px;background:#c9cacd;"></div>
<div class="b" style="left:404px;top:71px;width:1.2px;height:30px;background:#c9cacd;"></div>
<div class="b" style="left:480.5px;top:71px;width:1.2px;height:30px;background:#c9cacd;"></div>
<div class="b" style="left:286px;top:71px;width:2px;height:30px;background:#c6c7ca;"></div>
<div class="b" style="left:556px;top:71px;width:2px;height:30px;background:#c6c7ca;"></div>
<svg class="b" style="left:18px;top:73px;" width="26" height="25" viewBox="0 0 26 25"><path d="M6 7L15 10M6 7L7 16" stroke="#8a8f99" stroke-width="1.1" fill="none"/><rect x="1.9" y="3.5" width="8.8" height="9" fill="#fff" stroke="#9aa0aa" stroke-width="1"/><path d="M5 0.6l1.2 2.3l2.6.3l-1.9 1.8l.5 2.6L5 6.4L2.6 7.6l.5-2.6L1.2 3.2l2.6-.3z" fill="#f7cf4d" stroke="#e8b830" stroke-width=".5"/><rect x="15.7" y="6.0" width="8.3" height="7.800000000000001" fill="#fff" stroke="#6f7686" stroke-width="1"/><rect x="15.2" y="5.5" width="9.3" height="2.2" fill="#2f62a8"/><path d="M17.4 9.8h4.9M17.4 11.8h4.9" stroke="#9a9fa8" stroke-width="0.9"/><rect x="2.8" y="15.7" width="8.5" height="7.6" fill="#fff" stroke="#6f7686" stroke-width="1"/><rect x="2.3" y="15.2" width="9.5" height="2.2" fill="#2f62a8"/><path d="M4.5 19.5h5.1M4.5 21.5h5.1" stroke="#9a9fa8" stroke-width="0.9"/></svg>
<svg class="b" style="left:52px;top:83px;" width="12" height="8" viewBox="0 0 12 8"><path d="M1.5 1.3l4.5 4.5l4.5-4.5" stroke="#1b1b2b" stroke-width="1.7" fill="none"/></svg>
<svg class="b" style="left:73px;top:77px;" width="24" height="19" viewBox="0 0 24 19"><path d="M2.2 17V3.2q0-1 1-1h5.2l1.6 1.6h7.6q1 0 1 1V7H6.5L2.2 17z" fill="#f6e6c4" stroke="#e9c37b" stroke-width=".8"/><path d="M6 6.7h17L19.2 17.8H1.2z" fill="#e8b352"/></svg>
<svg class="b" style="left:108px;top:75px;" width="24" height="23" viewBox="0 0 24 23"><path d="M1 1.3h21v20.5h-19.5l-1.5-1.5z" fill="#6b2d92"/><rect x="4.2" y="1.9" width="14.6" height="11.1" fill="#fdfdfd"/><rect x="5.3" y="15.2" width="12.4" height="6.6" fill="#fdfdfd"/><rect x="8" y="17.1" width="3" height="4.7" fill="#6b2d92"/></svg>
<svg class="b" style="left:143px;top:74px;" width="25" height="24" viewBox="0 0 25 24"><rect x="1.6" y="1.5" width="17.6" height="17.4" fill="#f4ecf8" stroke="#8450a6" stroke-width="1"/><rect x="3.6" y="3.4" width="17.6" height="17.4" fill="#f4ecf8" stroke="#7a3fa0" stroke-width="1"/><path d="M5.6 5.2h18.4v17.8h-16.9l-1.5-1.5z" fill="#6b2d92"/><rect x="8.8" y="5.8" width="11.999999999999998" height="9.6" fill="#fdfdfd"/><rect x="9.899999999999999" y="17.3" width="9.799999999999999" height="5.7" fill="#fdfdfd"/><rect x="12.6" y="18.9" width="3" height="4.1" fill="#6b2d92"/></svg>
<svg class="b" style="left:184px;top:74px;" width="24" height="24" viewBox="0 0 24 24"><path d="M4.2 1q-.6 4.6 2.4 8.2l9.2 8.4l1.8-1.4L9.6 8.6Q6 5 4.2 1zM19.8 1q.6 4.6-2.4 8.2l-9.2 8.4l-1.8-1.4L14.4 8.6Q18 5 19.8 1z" fill="#b2b2b2"/><circle cx="5.4" cy="18.6" r="3.7" fill="#f0f1f3" stroke="#adadad" stroke-width="1.8"/><circle cx="18.6" cy="18.6" r="3.7" fill="#f0f1f3" stroke="#adadad" stroke-width="1.8"/></svg>
<svg class="b" style="left:220px;top:74px;" width="23" height="24" viewBox="0 0 23 24"><path d="M1.7 1.7h7.1l3.5 3.5v10.1h-10.6z" fill="#fbfbfb" stroke="#b9b9b9" stroke-width="1"/><path d="M8.799999999999999 1.7v3.5h3.5" fill="none" stroke="#b9b9b9" stroke-width="1"/><path d="M3.5 6.9h7.0" stroke="#b9b9b9" stroke-width=".9"/><path d="M3.5 9.0h7.0" stroke="#b9b9b9" stroke-width=".9"/><path d="M3.5 11.1h7.0" stroke="#b9b9b9" stroke-width=".9"/><path d="M3.5 13.2h7.0" stroke="#b9b9b9" stroke-width=".9"/><path d="M9.7 8.8h7.300000000000001l3.5 3.5v10.1h-10.8z" fill="#fbfbfb" stroke="#b9b9b9" stroke-width="1"/><path d="M17.0 8.8v3.5h3.5" fill="none" stroke="#b9b9b9" stroke-width="1"/><path d="M11.5 14.0h7.200000000000001" stroke="#b9b9b9" stroke-width=".9"/><path d="M11.5 16.1h7.200000000000001" stroke="#b9b9b9" stroke-width=".9"/><path d="M11.5 18.2h7.200000000000001" stroke="#b9b9b9" stroke-width=".9"/><path d="M11.5 20.3h7.200000000000001" stroke="#b9b9b9" stroke-width=".9"/></svg>
<svg class="b" style="left:255px;top:74px;" width="23" height="24" viewBox="0 0 23 24"><rect x="1.4" y="2.9" width="17.4" height="16.8" rx="1" fill="#dadada"/><path d="M6 1.8h2.6q.3-1.4 1.5-1.4t1.5 1.4h2.6v2.6H6z" fill="#c4c4c4"/><rect x="7.2" y="3" width="5.8" height="1.2" fill="#eee"/><path d="M10.6 9.8h7.0l3.8 3.8v8.8h-10.8z" fill="#fcfcfc" stroke="#bcbcbc" stroke-width="1"/><path d="M17.599999999999998 9.8v3.8h3.8" fill="none" stroke="#bcbcbc" stroke-width="1"/></svg>
<svg class="b" style="left:294.5px;top:77.6px;" width="25" height="15" viewBox="0 0 25 15"><path d="M1.1 2.8V13.2H10.8L8 10.2Q13.5 5 23.6 8.4Q19.5 0.3 12.4 0.3Q6.6 0.3 3.4 5z" fill="#4a82c6"/><path d="M1.1 2.8V13.2H10.8L8 10.2L3.4 5z" fill="#2f65ac"/></svg>
<svg class="b" style="left:331px;top:77.6px;" width="25" height="15" viewBox="0 0 25 15"><g transform="translate(24.6,0) scale(-1,1)"><path d="M1.1 2.8V13.2H10.8L8 10.2Q13.5 5 23.6 8.4Q19.5 0.3 12.4 0.3Q6.6 0.3 3.4 5z" fill="#bdbdbd"/><path d="M1.1 2.8V13.2H10.8L8 10.2L3.4 5z" fill="#a8a8a8"/></g></svg>
<span class="t" style="left:372.5px;top:75.2px;font-family:'Liberation Serif',serif;font-style:italic;font-weight:bold;font-size:20px;color:#3a6cb0;letter-spacing:-0.5px">Aa</span>
<svg class="b" style="left:412px;top:77px;" width="26" height="22" viewBox="0 0 26 22"><rect x="1.8" y="1" width="21.4" height="17" fill="#fdfdfd" stroke="#5d6270" stroke-width="1.1"/><rect x="1.3" y=".5" width="22.4" height="3.3" fill="#2f62a8"/><path d="M12.8 14.6l3.4 3.5l7-7.3" stroke="#3f8d6c" stroke-width="2.4" fill="none"/></svg>
<svg class="b" style="left:447px;top:75px;" width="26" height="22" viewBox="0 0 26 22"><rect x="1.5" y="2.0" width="8.2" height="7.199999999999999" fill="#fff" stroke="#6f7686" stroke-width="1"/><rect x="1" y="1.5" width="9.2" height="2.2" fill="#2f62a8"/><path d="M3.2 5.8h4.799999999999999M3.2 7.8h4.799999999999999" stroke="#9a9fa8" stroke-width="0.9"/><rect x="14.5" y="2.9" width="8.5" height="7.199999999999999" fill="#fff" stroke="#6f7686" stroke-width="1"/><rect x="14" y="2.4" width="9.5" height="2.2" fill="#2f62a8"/><path d="M16.2 6.699999999999999h5.1M16.2 8.7h5.1" stroke="#9a9fa8" stroke-width="0.9"/><rect x="2.1" y="12.9" width="8.5" height="7.4" fill="#fff" stroke="#6f7686" stroke-width="1"/><rect x="1.6" y="12.4" width="9.5" height="2.2" fill="#2f62a8"/><path d="M3.8000000000000003 16.7h5.1M3.8000000000000003 18.7h5.1" stroke="#9a9fa8" stroke-width="0.9"/><path d="M12.6 6.2V19.4L24.4 12.8z" fill="#3fc41f"/></svg>
<svg class="b" style="left:490px;top:74px;" width="24" height="25" viewBox="0 0 24 25"><path d="M2 4.2v13.6a6.6 2.7 0 0 0 13.2 0V4.2z" fill="#d7d7d7"/><ellipse cx="8.6" cy="4.2" rx="6.6" ry="2.7" fill="#e4e4e4"/><rect x="10.6" y="14.2" width="11.8" height="8.6" fill="#f4f4f4" stroke="#c6c6c6" stroke-width="1"/><path d="M12.8 17.2h7.4M12.8 19.6h7.4" stroke="#cfcfcf" stroke-width="1"/></svg>
<svg class="b" style="left:524px;top:73px;" width="25" height="25" viewBox="0 0 25 25"><path d="M2 9.5v10.8a5 2.2 0 0 0 10 0V9.5z" fill="#dcdcdc"/><ellipse cx="7" cy="9.5" rx="5" ry="2.2" fill="#e8e8e8"/><path d="M7 1v6.5M3.6 4.6L7 8l3.4-3.4" stroke="#bdbdbd" stroke-width="1.7" fill="none"/><path d="M12.6 10.4v12.2L23.6 16.5z" fill="#c4c4c4"/></svg>
<svg class="b" style="left:566px;top:74.5px;" width="23" height="23" viewBox="0 0 23 23"><circle cx="11.5" cy="11.4" r="10.9" fill="#2b62ab"/><path d="M7.6 8.6q0-3.9 4-3.9t4 3.4q0 2-1.9 3.1q-1.7 1-1.7 2.8" stroke="#fff" stroke-width="3" fill="none"/><circle cx="11.9" cy="17.9" r="1.9" fill="#fff"/></svg>
<svg class="b" style="left:599.5px;top:75.5px;" width="25" height="21" viewBox="0 0 25 21"><rect x="1" y=".6" width="21" height="17.6" fill="#fbfbfb" stroke="#dadada" stroke-width="1"/><rect x=".6" y=".3" width="21.8" height="3" fill="#2f62a8"/><path d="M1 9.6h21M11.6 3.4v14.8" stroke="#d8d8d8" stroke-width="1.2"/><path d="M15.6 15.8l4.2-4l4.2 4v4.2h-2.8v-2.4h-2.8v2.4h-2.8z" fill="#f08a1c"/></svg>
<svg class="b" style="left:635px;top:74px;" width="26" height="24" viewBox="0 0 26 24"><path d="M8.5 1h13.4q2 0 2 2v9.4q0 2-2 2h-.6l.4 2.6l-3.4-2.6H8.5z" fill="#2f62a8"/><path d="M3 6.2h13.6q2 0 2 2v8.8q0 2-2 2H8.4L4.6 22.4l.4-3.4H3q-2 0-2-2V8.2q0-2 2-2z" fill="#e9a94a"/><text x="4.6" y="16.4" font-family="Liberation Sans" font-weight="bold" font-size="8.6" fill="#fff">AI</text></svg>
<svg class="b" style="left:1718px;top:76px;" width="22" height="21" viewBox="0 0 22 21"><path d="M2.2 18.4L7.4 13.2M14 6.8L19.6 1.6" stroke="#2a9a3a" stroke-width="3.8" stroke-linecap="round"/><path d="M4.8 11l5.4 5.4l7.6-7.4l-5.4-5.4z" fill="#3fb84e" stroke="#1f7e2c" stroke-width="1.1"/><path d="M8.4 11.4l3-2.6M10.4 13l3-2.6" stroke="#b4f0b4" stroke-width="1.1"/></svg>
<svg class="b" style="left:1889.5px;top:73.5px;" width="25" height="25" viewBox="0 0 25 25"><circle cx="12.6" cy="11.8" r="11.6" fill="#2f64ad"/><path d="M2.4 17.4L.6 23.6l7.2-1.6z" fill="#2f64ad"/><path d="M6.6 8.3h12M6.6 12h12M6.6 15.7h8" stroke="#fff" stroke-width="2"/></svg>
<div class="b" style="left:342px;top:142px;width:1569px;height:39px;background:#fbfbfb;"></div>
<div class="b" style="left:404px;top:146px;width:53px;height:34px;background:#f4f4f4;"></div>
<div class="b" style="left:550px;top:145px;width:75px;height:35px;background:#fefefe;"></div>
<div class="b" style="left:346px;top:148px;width:1px;height:29px;background:#cdcdcd;"></div>
<div class="b" style="left:460px;top:148px;width:1px;height:29px;background:#cfcfcf;"></div>
<div class="b" style="left:698px;top:148px;width:1px;height:29px;background:#cfcfcf;"></div>
<svg class="b" style="left:355.3px;top:154.7px;" width="25" height="15" viewBox="0 0 25 15"><path d="M1.1 2.8V13.2H10.8L8 10.2Q13.5 5 23.6 8.4Q19.5 0.3 12.4 0.3Q6.6 0.3 3.4 5z" fill="#4a82c6"/><path d="M1.1 2.8V13.2H10.8L8 10.2L3.4 5z" fill="#2f65ac"/></svg>
<svg class="b" style="left:388.5px;top:159.5px;" width="12" height="8" viewBox="0 0 12 8"><path d="M1.4 1.3l4.6 4.4l4.6-4.4" stroke="#1b1b2b" stroke-width="1.7" fill="none"/></svg>
<svg class="b" style="left:410px;top:154.7px;" width="25" height="15" viewBox="0 0 25 15"><g transform="translate(24.6,0) scale(-1,1)"><path d="M1.1 2.8V13.2H10.8L8 10.2Q13.5 5 23.6 8.4Q19.5 0.3 12.4 0.3Q6.6 0.3 3.4 5z" fill="#c0c0c0"/><path d="M1.1 2.8V13.2H10.8L8 10.2L3.4 5z" fill="#ababab"/></g></svg>
<svg class="b" style="left:442.5px;top:159.5px;" width="12" height="8" viewBox="0 0 12 8"><path d="M1.4 1.3l4.6 4.4l4.6-4.4" stroke="#c9c9c9" stroke-width="1.5" fill="none"/></svg>
<svg class="b" style="left:468.5px;top:149.5px;" width="26" height="26" viewBox="0 0 26 26"><rect x="1.3" y="1.3" width="23" height="23" fill="#fdfdfd" stroke="#8d929c" stroke-width="1"/><rect x=".8" y=".8" width="24" height="2.6" fill="#4a7ec4"/><path d="M6.8 3.4v21" stroke="#8d929c" stroke-width="1"/><path d="M12.6 12v7.4h4" stroke="#6b7282" stroke-width="1" fill="none"/><rect x="9.2" y="6.0" width="6.7" height="7.4" fill="#eef1f6" stroke="#7d8494" stroke-width="1"/><rect x="8.7" y="5.5" width="7.7" height="2" fill="#3a6fb8"/><rect x="10.7" y="8.9" width="3.7" height="3.0" fill="#c3c7cf"/><rect x="15.7" y="14.4" width="6.7" height="7.4" fill="#eef1f6" stroke="#7d8494" stroke-width="1"/><rect x="15.2" y="13.9" width="7.7" height="2" fill="#3a6fb8"/><rect x="17.2" y="17.3" width="3.7" height="3.0" fill="#c3c7cf"/></svg>
<svg class="b" style="left:630px;top:149.5px;" width="26" height="26" viewBox="0 0 26 26"><rect x="1.4" y="1.4" width="23" height="22.8" fill="#fdfdfd" stroke="#8d929c" stroke-width="1"/><rect x=".9" y=".9" width="24" height="2.6" fill="#4a7ec4"/><path d="M10.5 3.5v21" stroke="#8d929c" stroke-width="1"/><rect x="12.4" y="6.3" width="10" height="7.800000000000001" fill="#ececec" stroke="#9a9a9a" stroke-width="1"/><rect x="15.9" y="7.8" width="5" height="4.800000000000001" fill="#d2d2d2"/><path d="M3.6 10.7h4.4M6 8.3l2.5 2.4L6 13.1" stroke="#4a86d0" stroke-width="1.2" fill="none"/></svg>
<svg class="b" style="left:665px;top:149.5px;" width="26" height="26" viewBox="0 0 26 26"><rect x="1.4" y="1.4" width="23" height="22.8" fill="#fdfdfd" stroke="#8d929c" stroke-width="1"/><rect x=".9" y=".9" width="24" height="2.6" fill="#4a7ec4"/><path d="M10.4 3.5v21" stroke="#8d929c" stroke-width="1"/><rect x="12.5" y="6.3" width="10" height="7.800000000000001" fill="#ececec" stroke="#9a9a9a" stroke-width="1"/><rect x="16" y="7.8" width="5" height="4.800000000000001" fill="#d2d2d2"/></svg>
<svg class="b" style="left:706px;top:150px;" width="29" height="25" viewBox="0 0 29 25"><rect x="1.6" y="1.5" width="7.4" height="6.8" fill="#fdfdfd" stroke="#7b7b7b" stroke-width="1.2"/><path d="M3.6 4.9h3.4" stroke="#3f6fb0" stroke-width="1.2"/><path d="M11.2 4.7h16" stroke="#4676b6" stroke-width="1.3"/><path d="M11 14.2h16M11 23.2h16" stroke="#b9b9b9" stroke-width="1.3"/></svg>
<svg class="b" style="left:744px;top:150px;" width="25" height="25" viewBox="0 0 25 25"><rect x="1.1" y="1.1" width="6.4" height="6.4" fill="#fdfdfd" stroke="#7b7b7b" stroke-width="1.2"/><path d="M2.6 4.300000000000001h3.4M4.3 2.6v3.4" stroke="#3f6fb0" stroke-width="1.2"/><path d="M9.6 4.300000000000001h14.4" stroke="#4676b6" stroke-width="1.3"/><rect x="1.1" y="9.3" width="6.4" height="6.4" fill="#fdfdfd" stroke="#7b7b7b" stroke-width="1.2"/><path d="M2.6 12.5h3.4M4.3 10.8v3.4" stroke="#3f6fb0" stroke-width="1.2"/><path d="M9.6 12.5h14.4" stroke="#4676b6" stroke-width="1.3"/><rect x="1.1" y="17.4" width="6.4" height="6.4" fill="#fdfdfd" stroke="#7b7b7b" stroke-width="1.2"/><path d="M2.6 20.599999999999998h3.4M4.3 18.9v3.4" stroke="#3f6fb0" stroke-width="1.2"/><path d="M9.6 20.599999999999998h14.4" stroke="#4676b6" stroke-width="1.3"/></svg>
<svg class="b" style="left:780.5px;top:151px;" width="22" height="22" viewBox="0 0 22 22"><rect x=".5" y=".6" width="21" height="21.2" fill="#5b95d6"/><rect x="2.8" y="3" width="16.2" height="3.7" fill="#fdfdfd"/><path d="M15 4l1.3 1.6L17.6 4z" fill="#5b95d6"/><path d="M2.8 9.5h16.2" stroke="#fdfdfd" stroke-width="1.3"/><path d="M11 12.6v7.4" stroke="#fdfdfd" stroke-width="1.7"/><path d="M8.3 14.8L11 11.8l2.7 3zM8.3 17.8L11 20.8l2.7-3z" fill="#fdfdfd"/></svg>
<svg class="b" style="left:813px;top:150px;" width="27" height="25" viewBox="0 0 27 25"><path d="M3.6 3.6L22.6 21" stroke="#4a7fc0" stroke-width="1.8"/><path d="M2 1.2v7.4l5.2-4.2z" fill="#4a7fc0"/><path d="M25 22.8l-7.6.2l4.6-5.6z" fill="#4a7fc0"/></svg>
<svg class="b" style="left:848px;top:150px;" width="27" height="24" viewBox="0 0 27 24"><path d="M7.6 4.2h3.2q4.6 0 4.6 5" stroke="#3f78c0" stroke-width="1.7" fill="none"/><path d="M14.6 15.6q0 4.6 5.6 4.6" stroke="#3f78c0" stroke-width="1.7" fill="none"/><rect x="2" y="2.4" width="5.8" height="3.7" fill="#ee9a3a"/><path d="M14.2 8.4l4 4.2l-4 4.2l-4-4.2z" fill="#f3a54a"/><path d="M12.4 12.4l1.6-1.6M14.6 14.4l1.6-1.6" stroke="#fff" stroke-width=".7"/><path d="M20.2 17l5.4 2.8l-5.4 2.8z" fill="#ee9a3a"/></svg>
<span class="t" style="left:504.5px;top:154.2px;font-size:15px;letter-spacing:0.089px;color:#1b1b1b;">Zoom</span>
<span class="t" style="left:557.9px;top:156.2px;font-size:15px;letter-spacing:-0.519px;color:#1b1b1b;">100%</span>
<svg class="b" style="left:610.5px;top:159.5px;" width="11" height="8" viewBox="0 0 11 8"><path d="M1.6 1.6l3.7 3.7l3.7-3.7" stroke="#222" stroke-width="1.5" fill="none"/></svg>
<svg class="b" style="left:44px;top:266px" width="60" height="600" viewBox="44 266 60 600"><path d="M52.3 275.70000000000005V295.7A8.899999999999999 3.6 0 0 0 70.1 295.7V275.70000000000005z" fill="#e8b558"/><ellipse cx="61.199999999999996" cy="275.70000000000005" rx="8.899999999999999" ry="3.6" fill="#ecc070"/><path d="M52.3 277.30000000000007A8.899999999999999 3.6 0 0 0 70.1 277.30000000000007" fill="none" stroke="#f6dca4" stroke-width=".8"/><rect x="60.4" y="286.9" width="19.2" height="12.2" rx="1.6" fill="#5fd8b6" stroke="#4a8f76" stroke-width="1"/><path d="M67.6 289.9l-3.2 3.1l3.2 3.1M72.4 289.9l3.2 3.1l-3.2 3.1" stroke="#1f6e58" stroke-width="1.7" fill="none"/><circle cx="66.2" cy="326" r="15" fill="#2b2a8c"/><path d="M71.6 320.6A7.4 7.4 0 1 0 71.6 331.6" stroke="#fdfdfd" stroke-width="3.3" fill="none"/><path d="M57.6 359v7M64 371.5h5M64 368l5-7M74.6 365v4" stroke="#2f6ac0" stroke-width="1.5" fill="none"/><rect x="52.0" y="352.1" width="11.199999999999998" height="6.999999999999966" fill="#e4eefb" stroke="#2f6ac0" stroke-width="1.6"/><rect x="69.2" y="355.7" width="10.9" height="8.9" fill="#e4eefb" stroke="#2f6ac0" stroke-width="1.6"/><rect x="52.0" y="366.2" width="11.199999999999998" height="10.100000000000046" fill="#e4eefb" stroke="#2f6ac0" stroke-width="1.6"/><rect x="69.2" y="369.6" width="10.9" height="8.9" fill="#e4eefb" stroke="#2f6ac0" stroke-width="1.6"/><path d="M52.3 395.70000000000005V415.7A8.899999999999999 3.6 0 0 0 70.1 415.7V395.70000000000005z" fill="#e8b558"/><ellipse cx="61.199999999999996" cy="395.70000000000005" rx="8.899999999999999" ry="3.6" fill="#ecc070"/><path d="M52.3 397.30000000000007A8.899999999999999 3.6 0 0 0 70.1 397.30000000000007" fill="none" stroke="#f6dca4" stroke-width=".8"/><rect x="59.6" y="405" width="7.8" height="2.6" fill="#e0752a"/><rect x="64.2" y="405.1" width="15.6" height="14.2" fill="#fdfdfd" stroke="#6c6c78" stroke-width="1"/><rect x="64.2" y="405.1" width="15.6" height="3.2" fill="#6c6c78"/><path d="M69.4 408v11.3M74.6 408v11.3M64.2 412h15.6M64.2 415.6h15.6" stroke="#8a8a94" stroke-width="1"/><path d="M56.2 431.3H69.6L77.1 438.8V458.7q0 2-2 2H56.2q-2 0-2-2V433.3q0-2 2-2z" fill="#5b9fe0"/><path d="M69.6 431.3V438.8H77.1z" fill="#fdfdfd"/><path d="M62.6 445H69.8V451.4Q69.4 456.4 63.6 458.4L62.4 456.8Q65.4 455.2 65.6 451.6H62.6z" fill="#fdfdfd"/><path d="M51.8 493.6V482.4L64 471.2" stroke="#9a9a9a" stroke-width="1.1" fill="none"/><path d="M61.2 496.6H54.6V484.6L65.4 474.4q1.4-1.2 2.8 0L78.4 483.8V489" stroke="#555" stroke-width="1.2" fill="none"/><path d="M55 484.8l5 4M78 484.2l-4 3.2" stroke="#555" stroke-width="1" fill="none"/><rect x="61.2" y="488.8" width="19.7" height="12.2" fill="#e8b558"/><path d="M61.6 489.2L71 496.6L80.5 489.2" stroke="#f7e2b4" stroke-width="1.1" fill="none"/><path d="M52.9 512.9H66.8L73.2 519.3V539.1H52.9z" fill="#fdfdfd" stroke="#5a5a5a" stroke-width="1.1" stroke-linejoin="round"/><path d="M66.8 512.9V519.3H73.2" fill="#e9e9e9" stroke="#5a5a5a" stroke-width="1.1" stroke-linejoin="round"/><rect x="73" y="523.8" width="7.9" height="14.2" fill="#1e7a46"/><path d="M74.6 527h4.8M74.6 530.8h4.8M74.6 534.6h4.8" stroke="#fdfdfd" stroke-width="1.5"/><path d="M61.2 523.2L72.6 521V540.4L61.2 538.2z" fill="#1e7a46"/><path d="M64.4 526.8l4.6 8M69 526.8l-4.6 8" stroke="#fdfdfd" stroke-width="1.6"/><g transform="translate(49.8,553.2)"><defs><linearGradient id="pg49" x1="0" x2="1" y1="0" y2="0"><stop offset="0" stop-color="#fefaf0"/><stop offset=".45" stop-color="#fcefd2"/><stop offset=".5" stop-color="#f8e0b2"/><stop offset="1" stop-color="#f8e0b2"/></linearGradient><clipPath id="gc49"><rect x="0" y="0" width="13.2" height="27"/></clipPath></defs><path d="M12.8 0.8H24.4L29.1 5.5V25.5H12.8z" fill="url(#pg49)"/><path d="M24.4 0.8V5.5H29.1z" fill="#ecd19c"/><g clip-path="url(#gc49)"><path d="M20.14 13.15L22.52 14.57L21.07 18.07L18.38 17.39L16.89 18.88L17.57 21.57L14.07 23.02L12.65 20.64L10.55 20.64L9.13 23.02L5.63 21.57L6.31 18.88L4.82 17.39L2.13 18.07L0.68 14.57L3.06 13.15L3.06 11.05L0.68 9.63L2.13 6.13L4.82 6.81L6.31 5.32L5.63 2.63L9.13 1.18L10.55 3.56L12.65 3.56L14.07 1.18L17.57 2.63L16.89 5.32L18.38 6.81L21.07 6.13L22.52 9.63L20.14 11.05z" fill="#f6c31c"/><circle cx="11.6" cy="12.1" r="4.9" fill="#fdfcf8" stroke="#4a4650" stroke-width="3"/></g><path d="M12.8 8.7h1.6v6.8h-1.6z" fill="#fdfcf8"/><path d="M15.6 6.7h5.2M15.6 10.2h10.4M15.6 13.5h10.4M15.6 17h10.4" stroke="#4a4542" stroke-width="1.9"/></g><path d="M58.4 594.6H55.2q-2.2 0-2.2 2.2V613.4q0 3.6 3.6 3.6H60" stroke="#3f7cc2" stroke-width="1.5" fill="none"/><path d="M57.4 613.4l4.2 3.8l-4.2 3.8" stroke="#3f7cc2" stroke-width="1.7" fill="none"/><path d="M61.2 596.7H79.8M66.2 599.2H79.8M66.2 601.7H79.8M66.2 604.3H79.8M66.2 606.8H79.8M66.2 609.3H79.8M66.2 611.8H79.8M61.2 614.3H79.8" stroke="#a9a9a9" stroke-width="1.1"/><path d="M56.2 632.7H71L77.1 638.8V651.2H56.2z" fill="#e9e9e9"/><path d="M71 632.7V638.8H77.1z" fill="#d2d2d2"/><rect x="56.2" y="651.2" width="20.9" height="8.4" fill="#8d5ab0"/><text x="60.4" y="647.2" font-family="Liberation Sans" font-weight="bold" font-size="10" fill="#8a5aa8" letter-spacing="-.3">{:}</text><text x="58.2" y="658.1" font-family="Liberation Sans" font-weight="bold" font-size="6.6" fill="#fdfdfd" letter-spacing="-.1">JSON</text><path d="M52.3 674.8H59.699999999999996L61.099999999999994 672.4H66V684.7H52.3z" fill="#ecc070"/><path d="M61.699999999999996 673.4H65V675.0H60.699999999999996z" fill="#f8e8c6"/><path d="M53.8 686.8H64.6" stroke="#4a86c8" stroke-width="1.3"/><path d="M66 687.3H73.4L74.8 684.9H79.8V697.3H66z" fill="#ecc070"/><path d="M75.4 685.9H78.8V687.5H74.4z" fill="#f8e8c6"/><path d="M67.3 699.3H78.2" stroke="#4a86c8" stroke-width="1.3"/><rect x="55.6" y="713.2" width="21" height="26" fill="#fdfdfd" stroke="#5a5a5a" stroke-width="1.1"/><text x="59.4" y="721.2" font-family="Liberation Sans" font-weight="bold" font-size="7.6" fill="#d9432a" letter-spacing=".1">PDF</text><path d="M66.4 724.6q1.2 3.6-.2 6.4q-1.6 3.4-5 5.6M66.2 731q2.6 2.8 6.6 3.2M61.4 736.4q5.4-3.2 11.2-2.4" stroke="#d9432a" stroke-width="1.6" fill="none" stroke-linecap="round"/><path d="M55.6 753.2H69.6L75.6 759.2V779.2H55.6z" fill="#fdfdfd" stroke="#5a5a5a" stroke-width="1.1" stroke-linejoin="round"/><path d="M69.6 753.2V759.2H75.6" fill="#e9e9e9" stroke="#5a5a5a" stroke-width="1.1" stroke-linejoin="round"/><path d="M58 757h4M64 757h3" stroke="#9a9a9a" stroke-width="1"/><rect x="57" y="760" width="1.4" height="17" fill="#d8d8d8"/><rect x="61.6" y="761.6" width="4.2" height="5.6" fill="#4a9a8a"/><path d="M58.6 769.3H73" stroke="#6a6a6a" stroke-width="1"/><rect x="67.6" y="771.6" width="4.8" height="4.4" fill="#e03a30"/><path d="M54.4 793H68.4L74.4 799V819.4H54.4z" fill="#fdfdfd" stroke="#5a5a5a" stroke-width="1.1" stroke-linejoin="round"/><path d="M68.4 793V799H74.4" fill="#e9e9e9" stroke="#5a5a5a" stroke-width="1.1" stroke-linejoin="round"/><text x="55.9" y="803.2" font-family="Liberation Sans" font-weight="bold" font-size="6.8" fill="#1e88e0" letter-spacing="-.3">SQL</text><rect x="68" y="806.6" width="12.6" height="13.8" fill="#fafafa" stroke="#6a6a6a" stroke-width="1"/><path d="M70 806v1.8M72.4 806v1.8M74.8 806v1.8M77.2 806v1.8" stroke="#6a6a6a" stroke-width=".9"/><path d="M70 811h8.6M70 813.4h8.6M70 815.8h8.6M70 818.2h8.6" stroke="#a8a8a8" stroke-width="1"/><path d="M55.6 833.2H69.6L75.6 839.2V859.2H55.6z" fill="#fdfdfd" stroke="#5a5a5a" stroke-width="1.1" stroke-linejoin="round"/><path d="M69.6 833.2V839.2H75.6" fill="#e9e9e9" stroke="#5a5a5a" stroke-width="1.1" stroke-linejoin="round"/><path d="M63.2 841.2l-4.4 4l4.4 4M68 841.2l4.4 4l-4.4 4" stroke="#55555c" stroke-width="1.8" fill="none"/><path d="M59 851.7H72.3M59 854.2H72.3M59 856.7H72.3" stroke="#6f6f6f" stroke-width="1"/></svg>
</body></html>
